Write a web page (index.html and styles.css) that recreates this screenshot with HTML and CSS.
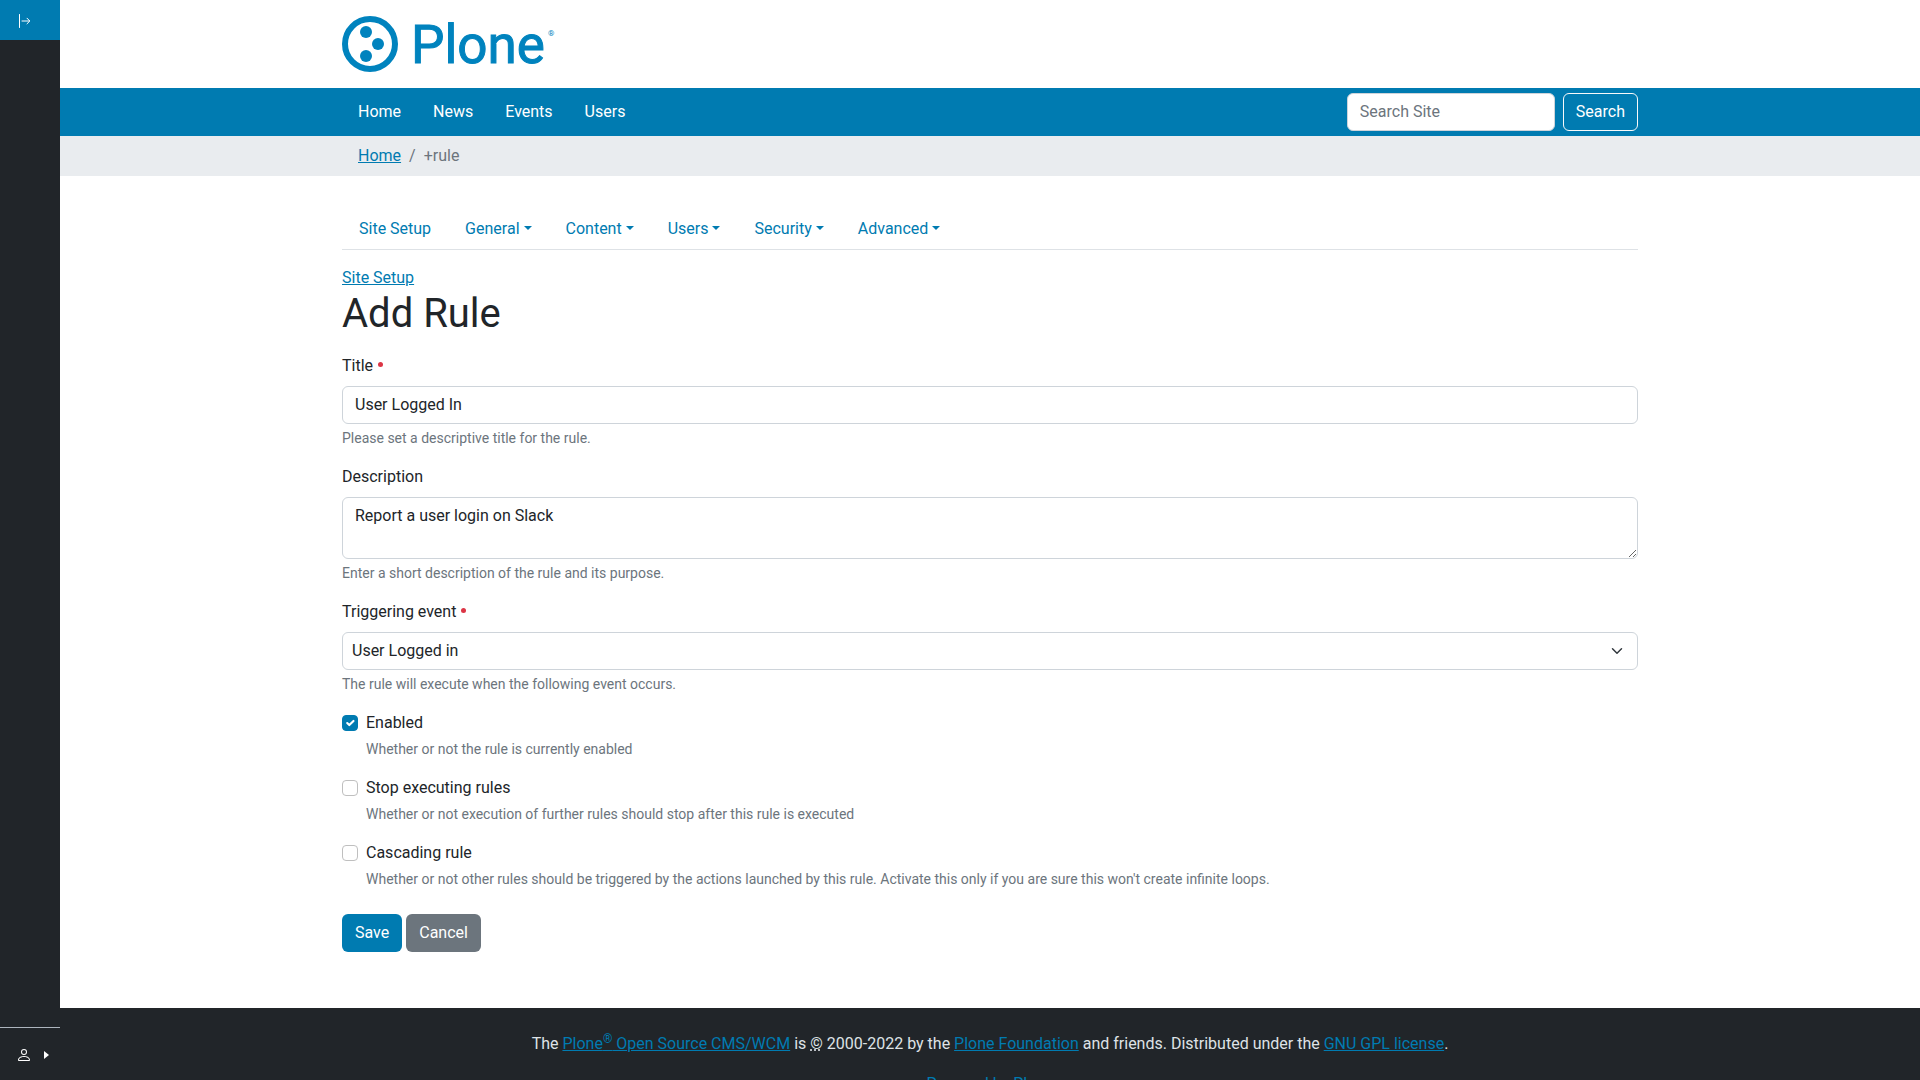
FILE: index.html
```html
<!DOCTYPE html>
<html lang="en">
<head>
<meta charset="utf-8">
<meta name="viewport" content="width=device-width, initial-scale=1">
<title>Add Rule</title>
<link rel="stylesheet" href="styles.css">
</head>
<body>
<aside class="toolbar">
  <button class="toolbar-toggle" type="button" aria-label="Expand toolbar">
    <svg width="16" height="16" viewBox="0 0 16 16" fill="none" stroke="currentColor" stroke-linecap="round" stroke-linejoin="round"><path d="M3.5 1.5v13M6 8h7.500M11 5.200 13.800 8 11 10.800"/></svg>
  </button>
  <button class="toolbar-user" type="button" aria-label="User menu">
    <svg width="16" height="16" viewBox="0 0 16 16" fill="currentColor"><path d="M8 8a3 3 0 1 0 0-6 3 3 0 0 0 0 6zm2-3a2 2 0 1 1-4 0 2 2 0 0 1 4 0zm4 8c0 1-1 1-1 1H3s-1 0-1-1 1-4 6-4 6 3 6 4zm-1-.004c-.001-.246-.154-.986-.832-1.664C11.516 10.680 10.289 10 8 10c-2.290 0-3.516.680-4.168 1.332-.678.678-.830 1.418-.832 1.664h10z"/></svg>
    <span class="caret-right"></span>
  </button>
</aside>
<div class="page">
  <header class="header">
    <div class="container">
      <a class="logo" href="#" aria-label="Plone">
        <svg width="216" height="68" viewBox="0 0 216 68" fill="#0083be">
          <circle cx="28" cy="34" r="25" fill="none" stroke="#0083be" stroke-width="6"/>
          <circle cx="24" cy="22" r="6"/>
          <circle cx="36" cy="34" r="6"/>
          <circle cx="24" cy="46" r="6"/>
          <text class="logo-name" x="69" y="53">Plone</text>
          <text class="logo-mark" x="206" y="26">®</text>
        </svg>
      </a>
    </div>
  </header>
  <nav class="mainnav">
    <div class="container mainnav-row">
      <ul class="mainnav-list">
        <li><a href="#">Home</a></li>
        <li><a href="#">News</a></li>
        <li><a href="#">Events</a></li>
        <li><a href="#">Users</a></li>
      </ul>
      <form class="search">
        <input class="control search-input" type="search" placeholder="Search Site" aria-label="Search Site">
        <button class="btn btn-outline" type="button">Search</button>
      </form>
    </div>
  </nav>
  <nav class="breadcrumbs" aria-label="Breadcrumb">
    <ol class="container breadcrumbs-list">
      <li><a href="#">Home</a></li>
      <li class="current">+rule</li>
    </ol>
  </nav>
  <main class="container content">
    <ul class="tabs">
      <li><a href="#">Site Setup</a></li>
      <li><a class="dropdown" href="#">General</a></li>
      <li><a class="dropdown" href="#">Content</a></li>
      <li><a class="dropdown" href="#">Users</a></li>
      <li><a class="dropdown" href="#">Security</a></li>
      <li><a class="dropdown" href="#">Advanced</a></li>
    </ul>
    <a href="#">Site Setup</a>
    <h1>Add Rule</h1>
    <form>
      <div class="field">
        <label class="label required" for="title">Title</label>
        <input class="control" id="title" type="text" value="User Logged In">
        <div class="help">Please set a descriptive title for the rule.</div>
      </div>
      <div class="field">
        <label class="label" for="description">Description</label>
        <textarea class="control" id="description" rows="2">Report a user login on Slack</textarea>
        <div class="help">Enter a short description of the rule and its purpose.</div>
      </div>
      <div class="field">
        <label class="label required" for="event">Triggering event</label>
        <select class="control select" id="event"><option>User Logged in</option></select>
        <div class="help">The rule will execute when the following event occurs.</div>
      </div>
      <div class="field check">
        <input id="enabled" type="checkbox" checked>
        <label for="enabled">Enabled</label>
        <div class="help">Whether or not the rule is currently enabled</div>
      </div>
      <div class="field check">
        <input id="stop" type="checkbox">
        <label for="stop">Stop executing rules</label>
        <div class="help">Whether or not execution of further rules should stop after this rule is executed</div>
      </div>
      <div class="field check">
        <input id="cascading" type="checkbox">
        <label for="cascading">Cascading rule</label>
        <div class="help">Whether or not other rules should be triggered by the actions launched by this rule. Activate this only if you are sure this won't create infinite loops.</div>
      </div>
      <div class="actions">
        <button class="btn btn-primary" type="button">Save</button>
        <button class="btn btn-secondary" type="button">Cancel</button>
      </div>
    </form>
  </main>
  <footer class="footer">
    <p>The <a href="#">Plone<sup>®</sup> Open Source CMS/WCM</a> is <abbr title="Copyright">©</abbr> 2000-2022 by the <a href="#">Plone Foundation</a> and friends. Distributed under the <a href="#">GNU GPL license</a>.</p>
    <p><a href="#">Powered by Plone</a></p>
  </footer>
</div>
</body>
</html>
```
FILE: styles.css
```css
*, *::before, *::after { box-sizing: border-box; }

body {
  display: flex;
  align-items: flex-start;
  margin: 0;
  font: 400 16px/24px Roboto, "Liberation Sans", sans-serif;
  color: #212529;
  background: #fff;
}

a { color: #007bb1; }
ul, ol { margin: 0; padding: 0; list-style: none; }
input, textarea, select, button { margin: 0; font: inherit; }

/* Side toolbar */
.toolbar {
  position: sticky;
  top: 0;
  flex: none;
  display: flex;
  flex-direction: column;
  justify-content: space-between;
  width: 60px;
  height: 100vh;
  background: #212529;
}
.toolbar button {
  display: flex;
  align-items: center;
  padding: 2px 0 0 16px;
  border: 0;
  color: #fff;
}
.toolbar svg, .caret-right { flex: none; }
.toolbar .toolbar-toggle { height: 40px; background: #007bb1; }
.toolbar .toolbar-user {
  gap: 12px;
  height: 53px;
  border-top: 1px solid #adb5bd;
  background: none;
}
.caret-right {
  border: 4px solid transparent;
  border-left: 5px solid #fff;
  border-right: 0;
}

.page { flex: 1; min-width: 0; }
.container { max-width: 1320px; margin: 0 auto; padding: 0 12px; }

/* Header */
.header { padding: 10px 0; }
.logo, .logo svg { display: block; }
.logo { width: 216px; }
.logo-name { font-size: 53px; font-weight: 400; stroke: #0083be; stroke-width: 1px; }
.logo-mark { font-size: 8px; }

.mainnav { background: #007bb1; }
.mainnav-row {
  display: flex;
  align-items: center;
  justify-content: space-between;
  min-height: 48px;
}
.mainnav-list { display: flex; }
.mainnav-list a {
  display: block;
  padding: 8px 16px;
  color: #fff;
  text-decoration: none;
}
.search { display: flex; gap: 8px; }
.control.search-input { width: 208px; }

.breadcrumbs { background: #e9ecef; }
.breadcrumbs-list { display: flex; padding: 8px 28px; }
.current { color: #6c757d; }
.current::before { content: "/"; padding: 0 8px; }

/* Content */
.content { padding-top: 32px; padding-bottom: 56px; }
.tabs {
  display: flex;
  margin-bottom: 16px;
  border-bottom: 1px solid #dee2e6;
}
.tabs a { display: block; padding: 9px 17px 8px; text-decoration: none; }
.dropdown::after {
  content: "";
  display: inline-block;
  margin-left: 4px;
  vertical-align: 4px;
  border: 4px solid transparent;
  border-top-color: currentColor;
  border-bottom: 0;
}
h1 { margin: 0 0 16px; font-size: 40px; line-height: 48px; font-weight: 400; }

/* Form */
.field { margin-bottom: 16px; }
.label { display: block; margin-bottom: 8px; }
.required::after {
  content: "";
  display: inline-block;
  width: 5px;
  height: 5px;
  margin-left: 5px;
  vertical-align: 4px;
  border-radius: 50%;
  background: #dc3545;
}
.control {
  display: block;
  width: 100%;
  padding: 6px 12px;
  border: 1px solid #ced4da;
  border-radius: 6px;
  color: #212529;
  background: #fff;
  appearance: none;
}
.control::placeholder { color: #6c757d; opacity: 1; }
textarea.control { min-height: 62px; resize: vertical; }
.select {
  padding-left: 9px;
  background: #fff url("data:image/svg+xml,%3Csvg xmlns='http://www.w3.org/2000/svg' viewBox='0 0 16 16'%3E%3Cpath fill='none' stroke='%23343a40' stroke-linecap='round' stroke-linejoin='round' stroke-width='2' d='m2 5 6 6 6-6'/%3E%3C/svg%3E") no-repeat right 14px center / 12px 12px;
}
.help { margin-top: 4px; font-size: 14px; line-height: 21px; color: #6c757d; }

.check {
  display: grid;
  grid-template-columns: 16px 1fr;
  column-gap: 8px;
  align-items: center;
}
.check input {
  width: 16px;
  height: 16px;
  border: 1px solid #bfbfbf;
  border-radius: 4px;
  background: #fff;
  appearance: none;
}
.check input:checked {
  border-color: #007bb1;
  background: #007bb1 url("data:image/svg+xml,%3Csvg xmlns='http://www.w3.org/2000/svg' viewBox='0 0 20 20'%3E%3Cpath fill='none' stroke='%23fff' stroke-linecap='round' stroke-linejoin='round' stroke-width='3' d='m6 10 3 3 6-6'/%3E%3C/svg%3E") center / contain no-repeat;
}
.check .help { grid-column: 2; }

.btn {
  padding: 6px 12px;
  border: 1px solid transparent;
  border-radius: 6px;
  color: #fff;
}
.btn-outline { border-color: #f8f9fa; background: transparent; }
.btn-primary { background: #007bb1; }
.btn-secondary { background: #6c757d; }
.actions { display: flex; gap: 4px; padding-top: 8px; }

/* Footer */
.footer {
  padding: 24px 12px;
  color: #dee2e6;
  background: #212529;
  text-align: center;
}
.footer p { margin: 0 0 16px; }
.footer sup { font-size: 12px; line-height: 0; }
.footer abbr { text-decoration: underline dotted; }
```
